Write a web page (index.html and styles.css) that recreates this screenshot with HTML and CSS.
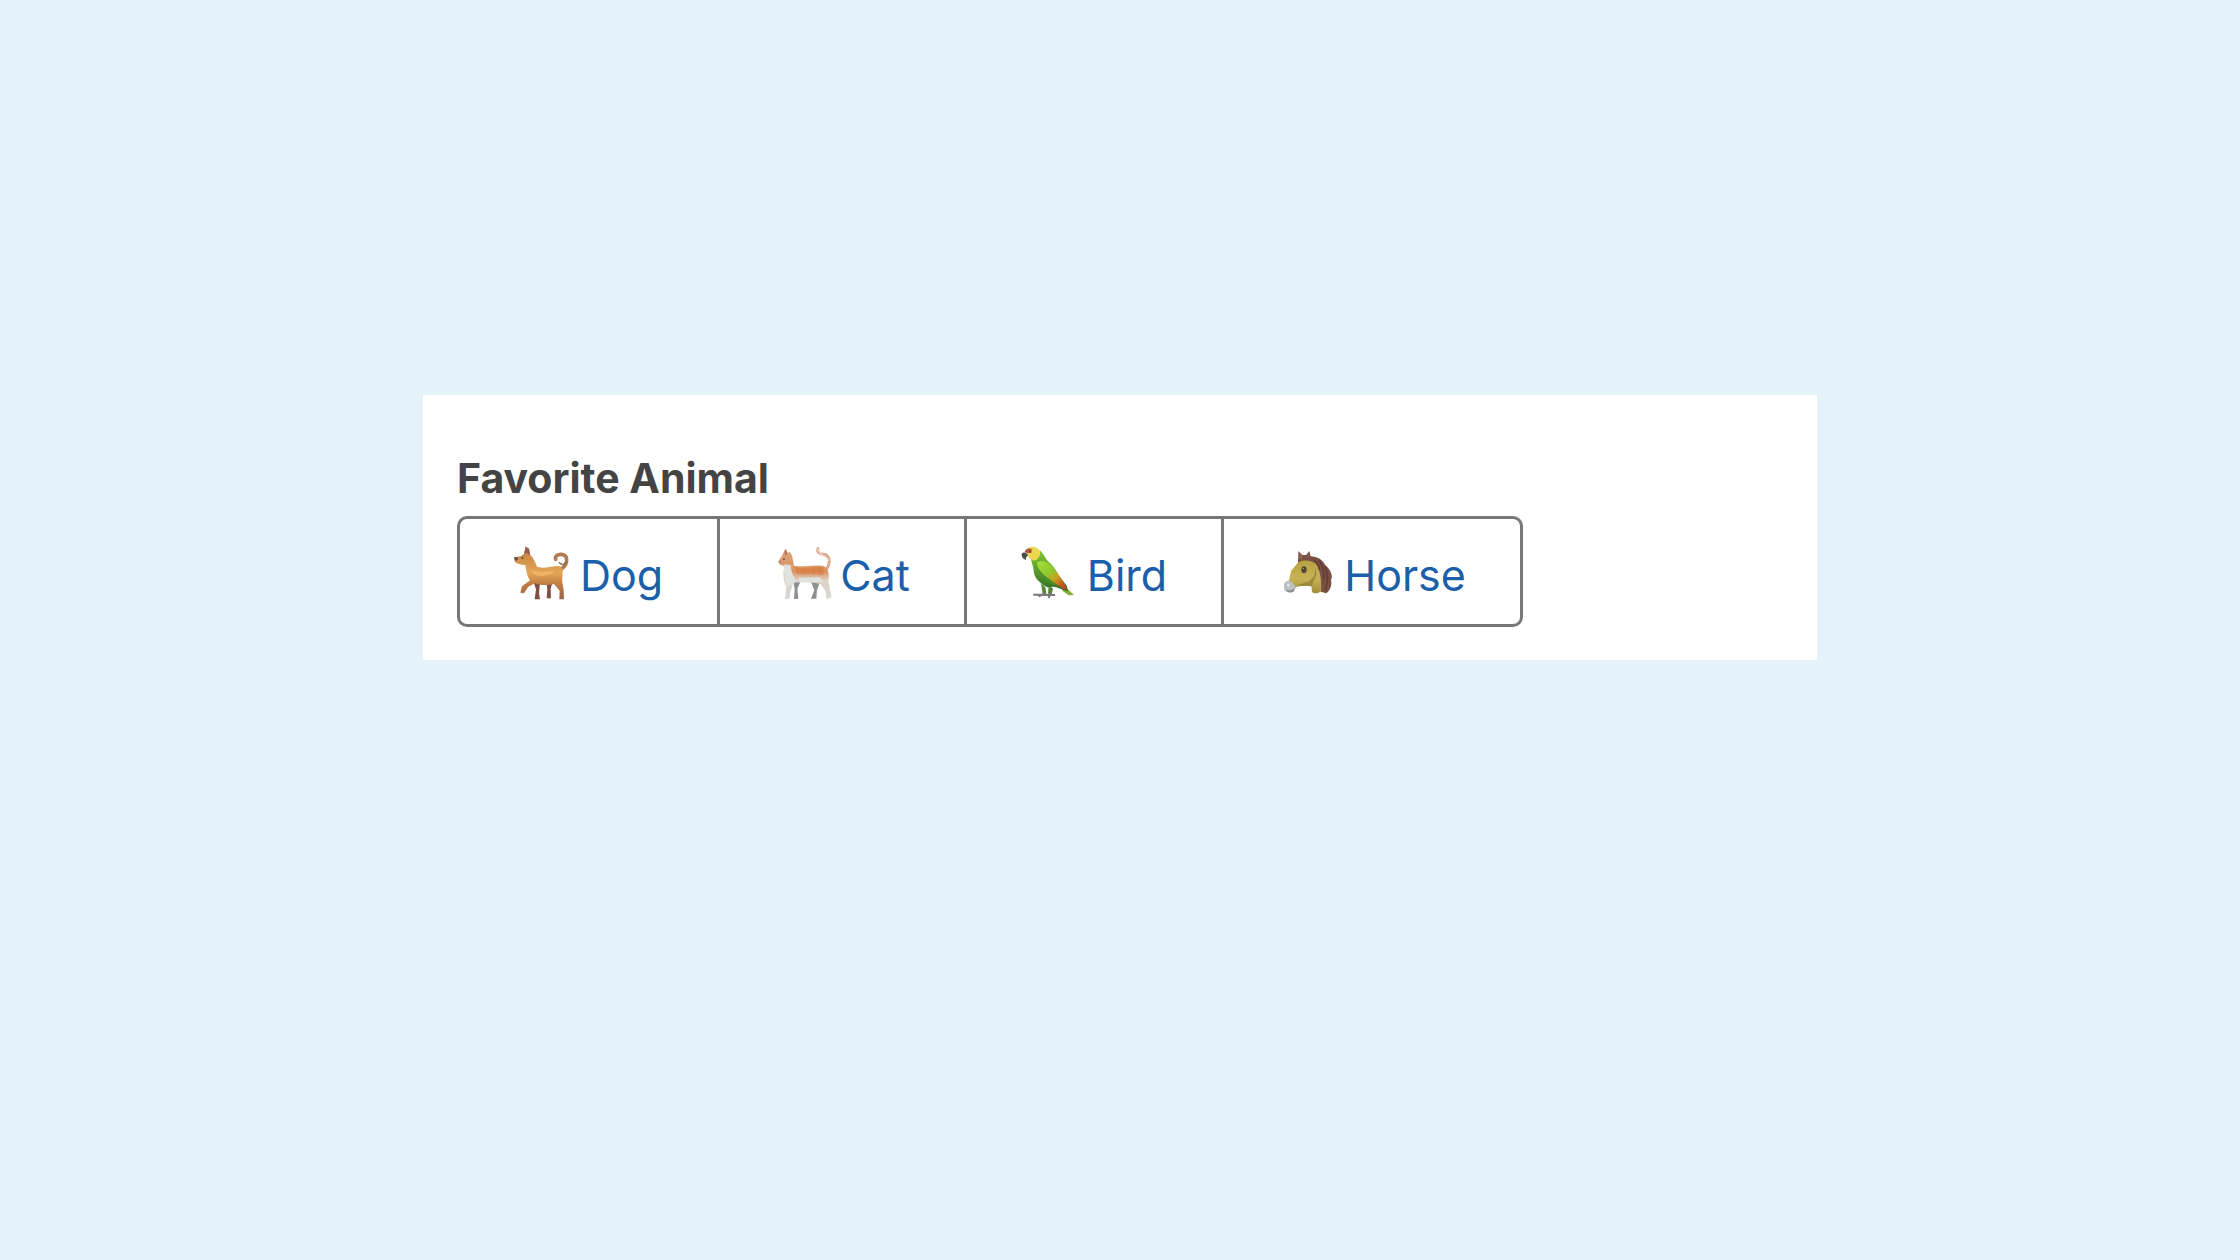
FILE: index.html
```html
<!DOCTYPE html>
<html lang="en">
<head>
    <meta charset="UTF-8">
    <meta name="viewport" content="width=device-width, initial-scale=1.0">
    <title>Favorite Animal</title>
    <link rel="stylesheet" href="styles.css">
</head>
<body>

<form class="panel">
    <fieldset class="field">
        <legend class="field-label">Favorite Animal</legend>
        <div class="button-group">
            <input class="option-input" type="radio" id="dog" name="animal" value="dog">
            <label class="option" for="dog">
                <svg class="icon" viewBox="36 42 180 168" aria-hidden="true">
                    <defs>
                        <linearGradient id="dogCoat" x1="0" y1="0" x2="0" y2="1">
                            <stop offset="0" stop-color="#c08043"/>
                            <stop offset="0.5" stop-color="#e3a555"/>
                            <stop offset="0.72" stop-color="#c07c42"/>
                            <stop offset="1" stop-color="#97654a"/>
                        </linearGradient>
                    </defs>
                    <path fill="#7d5146" d="M98 148 L121 150 L117 188 L120 208 L104 208 L108 178Z M138 148 L160 148 L152 176 L153 205 L140 205 L142 178Z"/>
                    <path fill="none" stroke="#b17a50" stroke-width="11" stroke-linecap="round" d="M182 118 C204 105 207 76 185 73 C172 72 164 80 167 88"/>
                    <path fill="none" stroke="#8f6049" stroke-width="4" stroke-linecap="round" d="M199 97 C194 106 182 104 178 98"/>
                    <path fill="url(#dogCoat)" d="M72 72 L77 50 L87 56 L91 75 C99 82 105 94 111 110 C130 117 149 110 169 108 Q184 107 188 118 C190 131 184 148 188 162 L191 180 L192 208 L178 208 L179 182 L162 162 C147 167 131 164 119 164 L104 160 L84 171 L72 190 L61 188 L66 169 L90 151 C80 137 79 119 76 105 C63 106 53 101 45 97 L42 82 L62 79Z"/>
                    <path fill="#985b50" d="M72 72 L77 50 L87 56 L90 76 L80 68Z"/>
                    <path fill="#66504a" d="M42 82 L54 82 L53 90 L45 92Z"/>
                    <circle cx="67" cy="84" r="3" fill="#62483a"/>
                    <path fill="#f2bd6b" opacity="0.65" d="M94 118 C117 132 144 125 165 121 C159 136 122 143 101 133Z"/>
                </svg>
                <span class="option-text">Dog</span>
            </label>
            <input class="option-input" type="radio" id="cat" name="animal" value="cat">
            <label class="option" for="cat">
                <svg class="icon" viewBox="18 42 180 168" aria-hidden="true">
                    <defs>
                        <linearGradient id="catCoat" x1="0" y1="0" x2="0" y2="1">
                            <stop offset="0" stop-color="#d9a27d"/>
                            <stop offset="0.45" stop-color="#dc9460"/>
                            <stop offset="0.63" stop-color="#ddd1c6"/>
                            <stop offset="1" stop-color="#d6dad8"/>
                        </linearGradient>
                    </defs>
                    <path fill="#8d918e" d="M82 153 L104 154 L94 176 L97 206 L84 207 L86 178Z M134 153 L162 155 L153 180 L151 206 L135 206 L145 180Z"/>
                    <path fill="none" stroke="#dca98a" stroke-width="9" stroke-linecap="round" d="M181 118 C200 90 184 73 172 73 C158 72 153 64 156 56"/>
                    <path fill="none" stroke="#eed8ca" stroke-width="4" stroke-linecap="round" d="M188 91 C184 77 158 77 156 57"/>
                    <path fill="url(#catCoat)" d="M50 73 L58 56 L65 70 L71 65 C81 77 80 89 84 107 C108 113 137 104 169 107 C188 110 191 135 187 153 L192 177 L197 202 L181 207 L179 183 L163 162 C145 158 120 157 99 157 L82 158 L74 184 L70 207 L57 207 L61 169 C51 153 52 130 55 108 L43 104 L37 95Z"/>
                    <path fill="#d8783c" opacity="0.6" d="M88 112 C116 119 145 109 171 111 C177 124 177 130 170 136 C143 130 119 135 92 131Z"/>
                    <path fill="#dfe3e0" d="M55 103 L75 106 C73 122 84 142 90 152 L80 166 L64 167 C53 146 53 124 55 103Z M98 143 L160 142 L171 156 L98 157Z"/>
                    <path fill="#bd7a66" d="M55 65 L60 56 L65 72 L58 77Z M37 95 L45 91 L44 104Z"/>
                    <circle cx="54" cy="88" r="3" fill="#675d52"/>
                    <path fill="none" stroke="#c27545" stroke-width="3" opacity="0.6" d="M112 112 L116 130 M139 110 L144 128 M162 111 L160 128"/>
                </svg>
                <span class="option-text">Cat</span>
            </label>
            <input class="option-input" type="radio" id="bird" name="animal" value="bird">
            <label class="option" for="bird">
                <svg class="icon" viewBox="30 42 180 168" aria-hidden="true">
                    <defs>
                        <linearGradient id="birdBody" x1="0.3" y1="0" x2="0.4" y2="1">
                            <stop offset="0" stop-color="#8cc436"/>
                            <stop offset="0.4" stop-color="#5fa42a"/>
                            <stop offset="1" stop-color="#2f6d26"/>
                        </linearGradient>
                        <linearGradient id="birdWing" x1="0" y1="0" x2="1" y2="1">
                            <stop offset="0" stop-color="#a6e03a"/>
                            <stop offset="0.4" stop-color="#8fc92c"/>
                            <stop offset="0.6" stop-color="#c9a01f"/>
                            <stop offset="0.8" stop-color="#c45a1c"/>
                            <stop offset="1" stop-color="#b03a28"/>
                        </linearGradient>
                    </defs>
                    <path fill="#548735" d="M96 159 L109 172 L112 192 L101 192Z M119 164 L132 176 L128 192 L117 191Z"/>
                    <path fill="none" stroke="#777777" stroke-width="6" stroke-linecap="round" d="M75 194 L105 194 M91 198 L109 190 M105 195 L136 195 M120 202 L124 190"/>
                    <path fill="#80ad38" d="M160 166 L178 179 L195 195 L179 196 L160 182Z"/>
                    <path fill="url(#birdBody)" d="M66 85 C82 89 96 77 91 60 C101 66 108 83 116 93 C132 105 141 122 151 138 L174 169 L177 184 C159 178 144 171 132 170 L114 172 C88 157 76 142 74 124 C74 108 66 98 66 85Z"/>
                    <path fill="url(#birdWing)" d="M84 98 C96 88 118 94 134 114 C148 133 170 160 174 182 C158 174 140 162 120 146 C100 132 86 118 84 98Z"/>
                    <path fill="#4f9428" opacity="0.6" d="M88 118 C104 138 124 150 148 169 C130 166 98 152 88 118Z"/>
                    <path fill="#ead74d" d="M48 64 C57 48 79 46 90 59 C97 71 91 86 79 91 C68 93 58 84 55 73Z"/>
                    <path fill="#b5533c" d="M47 67 C48 57 57 53 69 57 L64 67 L56 70Z"/>
                    <path fill="#464c46" d="M38 71 C43 65 53 68 57 76 L51 83 L51 90 C42 87 37 80 38 71Z"/>
                    <circle cx="64" cy="65" r="4" fill="#874c30"/>
                </svg>
                <span class="option-text">Bird</span>
            </label>
            <input class="option-input" type="radio" id="horse" name="animal" value="horse">
            <label class="option" for="horse">
                <svg class="icon" viewBox="15 42 180 168" aria-hidden="true">
                    <defs>
                        <linearGradient id="horseFace" x1="0" y1="0" x2="0" y2="1">
                            <stop offset="0" stop-color="#b8a142"/>
                            <stop offset="0.55" stop-color="#c7b355"/>
                            <stop offset="1" stop-color="#a58d38"/>
                        </linearGradient>
                    </defs>
                    <path fill="#795043" d="M82 82 L82 63 L94 75 L105 75 L115 63 L119 79 C139 79 156 91 162 104 C180 119 186 137 180 151 C184 166 177 182 166 190 L149 185 L132 137 L80 103Z"/>
                    <path fill="url(#horseFace)" d="M82 97 C99 88 121 90 135 102 C147 119 151 145 151 182 Q138 195 123 187 L121 166 C105 170 89 166 77 170 L67 179 L42 171 L54 151 L60 123Z"/>
                    <path fill="#8f7b35" opacity="0.7" d="M132 112 C140 128 134 146 126 156 L123 170 C105 165 90 168 77 170 C88 158 106 162 118 151 C130 140 134 128 132 112Z"/>
                    <path fill="#bac3c4" d="M39 163 C43 150 55 149 64 158 L73 169 L69 184 C57 191 41 186 39 176Z"/>
                    <path fill="#8a9292" d="M43 178 C52 184 62 181 72 174 L69 184 C59 191 47 187 43 178Z"/>
                    <circle cx="52" cy="165" r="4" fill="#e2e7e8"/>
                    <ellipse cx="99" cy="119" rx="8" ry="10" fill="#514934"/>
                    <circle cx="97" cy="115" r="2" fill="#c1b270"/>
                    <path fill="#8e6950" d="M86 77 L86 69 L95 81 L91 93Z M108 77 L113 68 L115 80Z"/>
                    <path fill="none" stroke="#57362f" stroke-width="5" opacity="0.7" d="M130 91 Q144 102 145 119 M143 91 Q162 113 158 148 M161 109 Q176 131 164 181"/>
                </svg>
                <span class="option-text">Horse</span>
            </label>
        </div>
    </fieldset>
</form>

</body>
</html>
```

FILE: styles.css
```css
body {
    font-family: Inter, "Liberation Sans", sans-serif;
    background-color: #e4f2fa;
    margin: 0;
    padding: 395px 423px;
}

.panel {
    background: white;
    padding: 58px 34px 33px;
}

.field {
    border: none;
    margin: 0;
    padding: 0;
    min-width: 0;
}

.field-label {
    padding: 0;
    margin-bottom: 13px;
    font-size: 41px;
    font-weight: 700;
    line-height: 50px;
    color: #444;
}

.button-group {
    display: inline-flex;
    vertical-align: top;
    border: 3px solid #777;
    border-radius: 10px;
}

.option {
    display: flex;
    align-items: flex-end;
    gap: 8px;
    padding: 25px 54px 24px 52px;
    color: #1b5faa;
    cursor: pointer;
}

.option + .option-input + .option {
    border-left: 3px solid #777;
}

/* the radio itself is hidden, its label is the button */
.option-input {
    position: absolute;
    opacity: 0;
    pointer-events: none;
}

.option-input:checked + .option {
    background: #1b5faa;
    color: white;
}

.option-input:focus-visible + .option {
    outline: 3px solid #1b5faa;
}

.icon {
    width: 60px;
    height: 56px;
}

.option-text {
    font-size: 43px;
    line-height: 50px;
}
```
